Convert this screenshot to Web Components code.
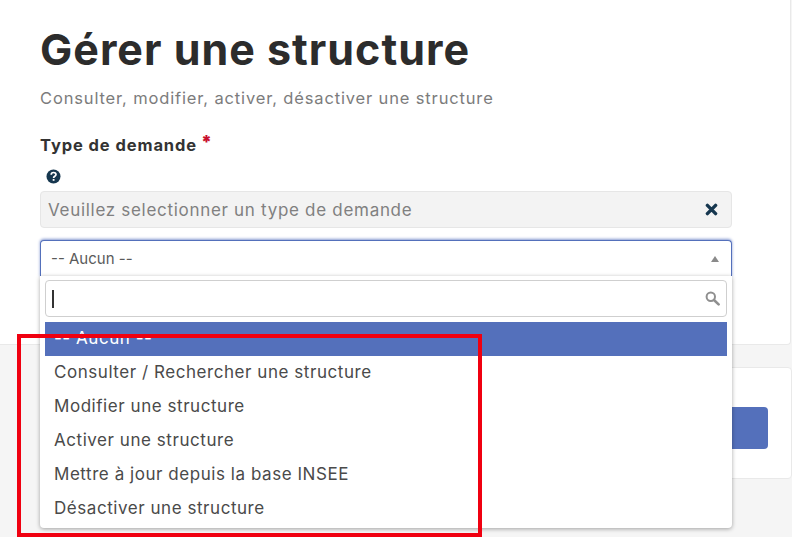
<!DOCTYPE html>
<html lang="fr">
<head>
<meta charset="utf-8">
<title>Gérer une structure</title>
<style>
  html, body { margin: 0; height: 100%; }
  body { background: #f5f5f5; overflow: hidden; font-family: Inter, Lato, sans-serif; color: #3a3a3a; }
</style>
</head>
<body>
<gestion-page></gestion-page>

<template id="tpl-combo">
  <style>
    :host { display: block; position: relative; height: 37px; }
    .trigger {
      box-sizing: border-box; height: 37px; background: #fff;
      border: 1px solid #5470bb; border-bottom-color: #d6d6d6; border-radius: 4px 4px 0 0;
      box-shadow: 0 -1px 3px 0 #8296cf;
      display: flex; align-items: center; justify-content: space-between;
      padding: 0 12px 0 10px; font-size: 15px; color: #5a5a5a;
    }
    .arrow { width: 0; height: 0; border: 4px solid transparent; border-top: 0; border-bottom: 6px solid #8a8a8a; }
    .menu {
      position: absolute; left: 0; right: 0; top: 36px; z-index: 2;
      box-sizing: border-box; height: 252px; padding: 4px 5px 0;
      background: #fff; border-radius: 0 0 4px 4px;
      box-shadow: 0 1px 4px rgba(0,0,0,.35);
    }
    .search {
      box-sizing: border-box; height: 37px; border: 1px solid #cfcfcf; border-radius: 4px;
      display: flex; align-items: center; justify-content: space-between; padding: 0 6px;
      margin-bottom: 5px;
    }
    .caret { width: 1.5px; height: 18px; background: #333; }
    ::slotted(combo-option) { display: block; }
  </style>
  <div class="trigger"><span>-- Aucun --</span><span class="arrow"></span></div>
  <div class="menu">
    <div class="search">
      <span class="caret"></span>
      <svg width="15" height="15" viewBox="0 0 15 15"><circle cx="5.8" cy="5.8" r="4.2" fill="none" stroke="#8f8f8f" stroke-width="2"/><path d="M9 9l4.6 4.4" stroke="#8f8f8f" stroke-width="2.6" stroke-linecap="round"/></svg>
    </div>
    <slot></slot>
  </div>
</template>

<script>
class ComboOption extends HTMLElement {
  constructor() {
    super();
    this.attachShadow({ mode: 'open' });
    this.shadowRoot.innerHTML = `
      <style>
        :host { display: block; box-sizing: border-box; height: 34px; line-height: 32px; padding-left: 9px; font-size: 17px; color: #4a4a4a; letter-spacing: .55px; white-space: nowrap; }
        :host([selected]) { background: #5470bb; color: #fff; }
      </style>
      <slot></slot>`;
  }
}
customElements.define('combo-option', ComboOption);

class ComboBox extends HTMLElement {
  constructor() {
    super();
    this.attachShadow({ mode: 'open' });
    this.shadowRoot.appendChild(document.getElementById('tpl-combo').content.cloneNode(true));
  }
}
customElements.define('combo-box', ComboBox);

class ChosenValue extends HTMLElement {
  constructor() {
    super();
    this.attachShadow({ mode: 'open' });
    this.shadowRoot.innerHTML = `
      <style>
        :host { display: flex; box-sizing: border-box; height: 37px; align-items: center; justify-content: space-between;
          background: #f3f3f3; border: 1px solid #e6e6e6; border-radius: 4px; padding: 0 13px 0 7px;
          font-size: 17px; letter-spacing: .7px; color: #808080; }
        svg { display: block; }
      </style>
      <slot></slot>
      <svg width="13" height="13" viewBox="0 0 13 13"><path d="M2.4 2.4l8.2 8.2M10.6 2.4l-8.2 8.2" stroke="#16374f" stroke-width="3.4" stroke-linecap="round"/></svg>`;
  }
}
customElements.define('chosen-value', ChosenValue);

class RedFrame extends HTMLElement {
  constructor() {
    super();
    this.attachShadow({ mode: 'open' });
    this.shadowRoot.innerHTML = `
      <style>
        :host { position: absolute; left: 17px; top: 334px; width: 465px; height: 203px; box-sizing: border-box; border: 4px solid #f00010; z-index: 5; }
      </style>`;
  }
}
customElements.define('red-frame', RedFrame);

class GestionPage extends HTMLElement {
  constructor() {
    super();
    this.attachShadow({ mode: 'open' });
    this.shadowRoot.innerHTML = `
      <style>
        :host { display: block; position: relative; height: 537px; overflow: hidden; }
        .card { background: #fff; border: 1px solid #e9e9e9; border-left: 0; border-top: 0; border-radius: 0 0 4px 0; width: 791px; box-sizing: border-box; height: 345px; padding: 22px 58px 0 40px; }
        h1 { margin: 0; font-size: 43px; line-height: 54px; font-weight: 700; letter-spacing: 1px; color: #2c2c2c; }
        .sub { margin: 11px 0 0; font-size: 16.5px; line-height: 22px; letter-spacing: .85px; color: #7c7c7c; }
        .label { margin-top: 26px; height: 24px; font-size: 16.5px; font-weight: 700; letter-spacing: .9px; color: #333; display: flex; }
        .label b { color: #c8102e; font-size: 18px; line-height: 14px; margin-left: 4px; }
        .help { display: block; margin: 10px 0 0 6px; }
        chosen-value { margin-top: 7px; }
        combo-box { margin-top: 12px; }
        .actions { margin: 22px 0 0 auto; width: 300px; height: 112px; box-sizing: border-box; background: #fff; border: 1px solid #e9e9e9; border-radius: 4px; display: flex; justify-content: flex-end; padding: 39px 23px 0 0; }
        .btn { width: 110px; height: 42px; background: #5470bb; border-radius: 4px; }
      </style>
      <section class="card">
        <h1>Gérer une structure</h1>
        <p class="sub">Consulter, modifier, activer, désactiver une structure</p>
        <div class="label">Type de demande<b>*</b></div>
        <svg class="help" width="15" height="15" viewBox="0 0 15 15"><circle cx="7.5" cy="7.5" r="7" fill="#16374f"/><path d="M5.2 5.8c0-3 4.8-3 4.8-.2 0 1.7-2.4 1.6-2.4 3.3" fill="none" stroke="#fff" stroke-width="1.7"/><rect x="6.7" y="10" width="1.8" height="1.8" fill="#fff"/></svg>
        <chosen-value>Veuillez selectionner un type de demande</chosen-value>
        <combo-box>
          <combo-option selected>-- Aucun --</combo-option>
          <combo-option>Consulter / Rechercher une structure</combo-option>
          <combo-option>Modifier une structure</combo-option>
          <combo-option>Activer une structure</combo-option>
          <combo-option>Mettre à jour depuis la base INSEE</combo-option>
          <combo-option>Désactiver une structure</combo-option>
        </combo-box>
      </section>
      <section class="actions"><div class="btn"></div></section>
      <red-frame></red-frame>`;
  }
}
customElements.define('gestion-page', GestionPage);
</script>
</body>
</html>
